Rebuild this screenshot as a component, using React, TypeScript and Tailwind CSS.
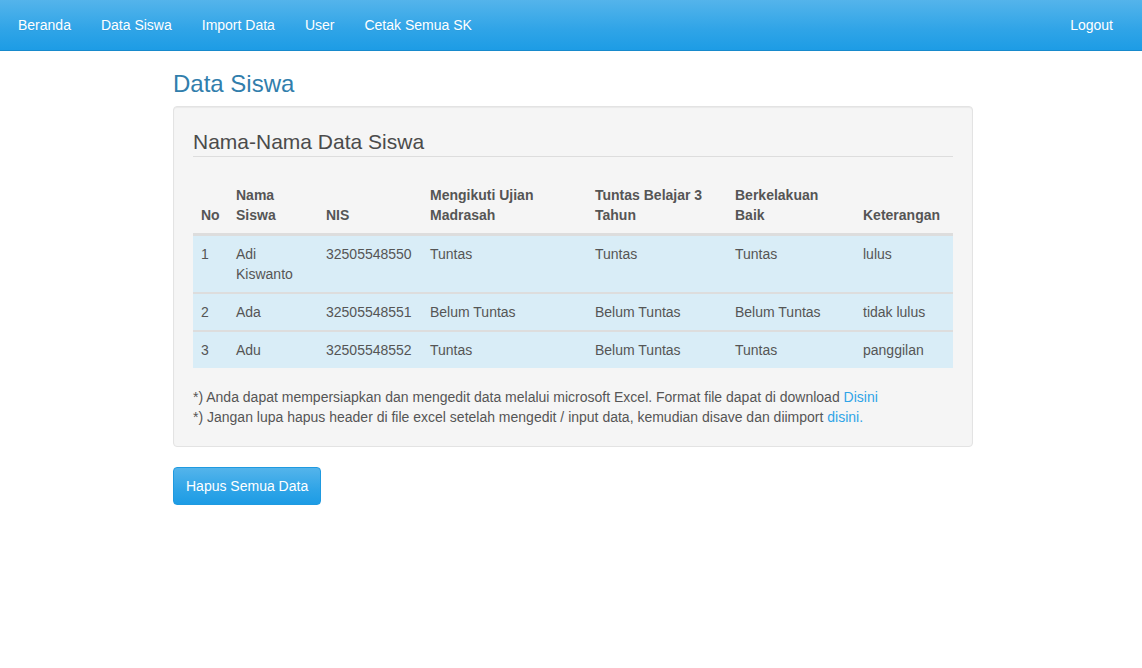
import React from "react";

const rows = [
  { no: "1", nama: "Adi Kiswanto", nis: "32505548550", ujian: "Tuntas", belajar: "Tuntas", baik: "Tuntas", ket: "lulus" },
  { no: "2", nama: "Ada", nis: "32505548551", ujian: "Belum Tuntas", belajar: "Belum Tuntas", baik: "Belum Tuntas", ket: "tidak lulus" },
  { no: "3", nama: "Adu", nis: "32505548552", ujian: "Tuntas", belajar: "Belum Tuntas", baik: "Tuntas", ket: "panggilan" },
];

export default function App() {
  return (
    <div className="min-h-[668px] bg-white text-[14px] leading-[20px] text-[#555555]" style={{ fontFamily: '"Liberation Sans", Arial, sans-serif' }}>
      <nav className="flex h-[51px] items-stretch justify-between border-b border-[#178acc] bg-[linear-gradient(#54b4eb,#2fa4e7_60%,#1d9ce5)] pl-[3px] pr-[14px] text-white">
        <div className="flex items-stretch">
          {["Beranda", "Data Siswa", "Import Data", "User", "Cetak Semua SK"].map((t) => (
            <a key={t} className="flex items-center px-[15px] pb-[1px] [text-shadow:0_1px_0_rgba(0,0,0,0.05)]">{t}</a>
          ))}
        </div>
        <a className="flex items-center px-[15px] pb-[1px]">Logout</a>
      </nav>

      <div className="mx-auto w-[800px] translate-x-[2px]">
        <h1 className="mt-[18px] mb-[7px] text-[24px] leading-[30px] text-[#317eac]">Data Siswa</h1>
        <div className="rounded-[4px] border border-[#e3e3e3] bg-[#f5f5f5] p-[19px] shadow-[inset_0_1px_1px_rgba(0,0,0,0.05)]">
          <h3 className="border-b border-[#dddddd] pt-[4px] pb-[3px] text-[21px] leading-[23px] text-[#4b4b4b]">Nama-Nama Data Siswa</h3>
          <table className="mt-[20px] mb-[19px] w-full table-fixed border-separate border-spacing-0">
            <colgroup>
              <col className="w-[35px]" />
              <col className="w-[90px]" />
              <col className="w-[104px]" />
              <col className="w-[165px]" />
              <col className="w-[140px]" />
              <col className="w-[128px]" />
              <col className="w-[98px]" />
            </colgroup>
            <thead>
              <tr>
                {["No", "Nama Siswa", "NIS", "Mengikuti Ujian Madrasah", "Tuntas Belajar 3 Tahun", "Berkelakuan Baik", "Keterangan"].map((h) => (
                  <th key={h} className="border-b-2 border-[#dddddd] p-[8px] text-left align-bottom font-bold">{h}</th>
                ))}
              </tr>
            </thead>
            <tbody>
              {rows.map((r, i) => {
                const c = i < rows.length - 1
                  ? "border-t border-b border-[#dddddd] bg-[#d9edf7] p-[8px] align-top"
                  : "border-t border-[#dddddd] bg-[#d9edf7] p-[8px] align-top";
                return (
                  <tr key={r.no}>
                    <td className={c}>{r.no}</td>
                    <td className={c}>{r.nama}</td>
                    <td className={c}>{r.nis}</td>
                    <td className={c}>{r.ujian}</td>
                    <td className={c}>{r.belajar}</td>
                    <td className={c}>{r.baik}</td>
                    <td className={c + " whitespace-nowrap"}>{r.ket}</td>
                  </tr>
                );
              })}
            </tbody>
          </table>
          <p>*) Anda dapat mempersiapkan dan mengedit data melalui microsoft Excel. Format file dapat di download <a className="text-[#2fa4e7]">Disini</a></p>
          <p>*) Jangan lupa hapus header di file excel setelah mengedit / input data, kemudian disave dan diimport <a className="text-[#2fa4e7]">disini.</a></p>
        </div>
        <button className="mt-[20px] rounded-[4px] border border-[#1f9ae0] bg-[linear-gradient(#54b4eb,#2fa4e7_60%,#1d9ce5)] px-[12px] py-[8px] text-[14px] leading-[20px] text-white">Hapus Semua Data</button>
      </div>
    </div>
  );
}
